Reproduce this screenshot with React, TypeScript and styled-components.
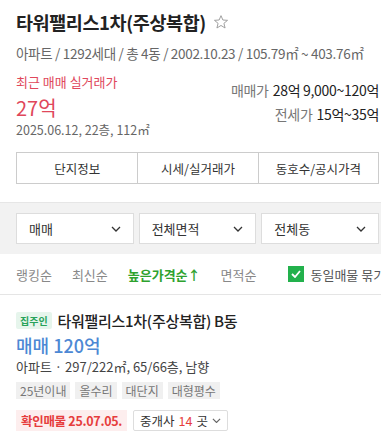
import React from 'react'
import styled, { createGlobalStyle } from 'styled-components'

const GlobalStyle = createGlobalStyle`
    html, body {
        margin: 0;
        padding: 0;
        background: #fff;
        overflow: hidden;
    }
    body {
        font-family: "Noto Sans CJK KR", "Noto Sans", sans-serif;
        color: #222;
    }
`

const Page = styled.div`
    width: 381px;
    height: 443px;
    overflow: hidden;
`

const Header = styled.section`
    padding: 10px 2px 0 16px;
`

const TitleRow = styled.div`
    display: flex;
    align-items: center;
    gap: 7px;
    height: 24px;
`

const Title = styled.h1`
    margin: 0;
    font-size: 18.5px;
    font-weight: 700;
    letter-spacing: -0.4px;
    color: #222;
`

const Meta = styled.div`
    margin-top: 9px;
    font-size: 13.5px;
    color: #666;
    letter-spacing: -0.3px;
    white-space: nowrap;
`

const PriceRow = styled.div`
    display: flex;
    justify-content: space-between;
    margin-top: 8px;
`

const Recent = styled.div`
    display: flex;
    flex-direction: column;
`

const RecentLabel = styled.div`
    margin-top: 2px;
    font-size: 13px;
    color: #e0475b;
    line-height: 18px;
`

const RecentPrice = styled.div`
    font-size: 20px;
    color: #e0475b;
    line-height: 24px;
    margin-top: 5px;
`

const RecentInfo = styled.div`
    margin-top: 2px;
    font-size: 12.5px;
    color: #666;
    line-height: 16px;
`

const Ranges = styled.div`
    display: flex;
    flex-direction: column;
    align-items: flex-end;
    gap: 5px;
    padding-top: 10px;
`

const RangeLine = styled.div`
    font-size: 14px;
    color: #222;
    line-height: 19px;
    letter-spacing: -0.3px;
`

const RangeLabel = styled.span`
    color: #777;
    margin-right: 4px;
`

const Tabs = styled.div`
    display: grid;
    grid-template-columns: repeat(3, 1fr);
    margin-top: 14px;
    border: 1px solid #ccc;
    height: 30px;
`

const Tab = styled.div`
    display: flex;
    align-items: center;
    justify-content: center;
    font-size: 12.5px;
    color: #333;
    & + & {
        border-left: 1px solid #ccc;
    }
`

const FilterBand = styled.div`
    margin-top: 18px;
    background: #f2f2f2;
    border-top: 1px solid #e6e6e6;
    padding: 10px 2px 10px 16px;
    display: grid;
    grid-template-columns: repeat(3, 1fr);
    gap: 5px;
`

const Select = styled.div`
    display: flex;
    align-items: center;
    justify-content: space-between;
    height: 29px;
    background: #fff;
    border: 1px solid #ddd;
    padding: 0 12px 0 12px;
    font-size: 13px;
    color: #333;
`

const SortRow = styled.div`
    display: flex;
    align-items: center;
    height: 40px;
    padding-left: 16px;
    border-bottom: 1px solid #e5e5e5;
    white-space: nowrap;
`

const SortItem = styled.span<{ $active?: boolean }>`
    font-size: 13px;
    color: ${({ $active }) => ($active ? '#2ea22e' : '#888')};
    font-weight: ${({ $active }) => ($active ? 600 : 400)};
`

const SortSep = styled.span`
    width: 1px;
    height: 12px;
    background: #ddd;
    margin: 0 10px;
`

const Bundle = styled.label`
    display: flex;
    align-items: center;
    gap: 6px;
    margin-left: 32px;
    font-size: 13px;
    color: #555;
`

const CheckBox = styled.span`
    width: 16px;
    height: 16px;
    background: #22b14c;
    display: flex;
    align-items: center;
    justify-content: center;
`

const Item = styled.article`
    padding: 15px 2px 0 16px;
`

const ItemTitleRow = styled.div`
    display: flex;
    align-items: center;
    gap: 6px;
`

const OwnerBadge = styled.span`
    font-size: 10px;
    color: #27a35a;
    background: #e6f5ec;
    border-radius: 2px;
    padding: 0 4px;
    height: 17px;
    line-height: 17px;
    font-weight: 600;
`

const ItemTitle = styled.div`
    font-size: 15px;
    font-weight: 500;
    color: #222;
    letter-spacing: -0.3px;
`

const ItemPrice = styled.div`
    margin-top: 2px;
    font-size: 18px;
    font-weight: 500;
    color: #4d88d4;
    line-height: 24px;
`

const ItemSpec = styled.div`
    margin-top: 1px;
    font-size: 13px;
    color: #444;
    line-height: 18px;
`

const Tags = styled.div`
    display: flex;
    gap: 5px;
    margin-top: 6px;
`

const Tag = styled.span`
    font-size: 12px;
    color: #777;
    background: #f0f0f0;
    padding: 0 4px;
    height: 17px;
    line-height: 17px;
`

const Bottom = styled.div`
    display: flex;
    align-items: center;
    gap: 6px;
    margin-top: 11px;
`

const Confirmed = styled.span`
    font-size: 12.5px;
    font-weight: 700;
    color: #e63d3d;
    background: #fdeeee;
    padding: 0 5px;
    height: 21px;
    line-height: 21px;
    letter-spacing: -0.3px;
`

const Agents = styled.span`
    display: flex;
    align-items: center;
    gap: 4px;
    height: 19px;
    border: 1px solid #ddd;
    border-radius: 2px;
    padding: 0 6px;
    font-size: 12.5px;
    color: #333;
`

const Count = styled.span`
    color: #e63d3d;
`

const Chevron = ({ size = 10, color = '#333' }: { size?: number; color?: string }) => (
    <svg width={size} height={size * 0.6} viewBox="0 0 10 6">
        <path d="M1 1 L5 5 L9 1" fill="none" stroke={color} strokeWidth="1.3" />
    </svg>
)

const App = () => {
    return (
        <Page>
            <GlobalStyle />
            <Header>
                <TitleRow>
                    <Title>타워팰리스1차(주상복합)</Title>
                    <svg width="16" height="16" viewBox="0 0 24 24">
                        <path d="M12 2.5 L14.8 9 L21.8 9.5 L16.4 14 L18.1 21 L12 17.2 L5.9 21 L7.6 14 L2.2 9.5 L9.2 9 Z" fill="none" stroke="#999" strokeWidth="1.4" strokeLinejoin="round" />
                    </svg>
                </TitleRow>
                <Meta>아파트 / 1292세대 / 총 4동 / 2002.10.23 / 105.79㎡ ~ 403.76㎡</Meta>
                <PriceRow>
                    <Recent>
                        <RecentLabel>최근 매매 실거래가</RecentLabel>
                        <RecentPrice>27억</RecentPrice>
                        <RecentInfo>2025.06.12, 22층, 112㎡</RecentInfo>
                    </Recent>
                    <Ranges>
                        <RangeLine><RangeLabel>매매가</RangeLabel>28억 9,000~120억</RangeLine>
                        <RangeLine><RangeLabel>전세가</RangeLabel>15억~35억</RangeLine>
                    </Ranges>
                </PriceRow>
                <Tabs>
                    <Tab>단지정보</Tab>
                    <Tab>시세/실거래가</Tab>
                    <Tab>동호수/공시가격</Tab>
                </Tabs>
            </Header>

            <FilterBand>
                <Select>매매<Chevron /></Select>
                <Select>전체면적<Chevron /></Select>
                <Select>전체동<Chevron /></Select>
            </FilterBand>

            <SortRow>
                <SortItem>랭킹순</SortItem>
                <SortSep />
                <SortItem>최신순</SortItem>
                <SortSep />
                <SortItem $active>높은가격순↑</SortItem>
                <SortSep />
                <SortItem>면적순</SortItem>
                <Bundle>
                    <CheckBox>
                        <svg width="10" height="8" viewBox="0 0 10 8">
                            <path d="M1 4 L4 7 L9 1" fill="none" stroke="#fff" strokeWidth="1.8" />
                        </svg>
                    </CheckBox>
                    동일매물 묶기
                </Bundle>
            </SortRow>

            <Item>
                <ItemTitleRow>
                    <OwnerBadge>집주인</OwnerBadge>
                    <ItemTitle>타워팰리스1차(주상복합) B동</ItemTitle>
                </ItemTitleRow>
                <ItemPrice>매매 120억</ItemPrice>
                <ItemSpec>아파트 · 297/222㎡, 65/66층, 남향</ItemSpec>
                <Tags>
                    <Tag>25년이내</Tag>
                    <Tag>올수리</Tag>
                    <Tag>대단지</Tag>
                    <Tag>대형평수</Tag>
                </Tags>
                <Bottom>
                    <Confirmed>확인매물 25.07.05.</Confirmed>
                    <Agents>중개사 <Count>14</Count>곳 <Chevron size={9} color="#666" /></Agents>
                </Bottom>
            </Item>
        </Page>
    )
}

export default App
